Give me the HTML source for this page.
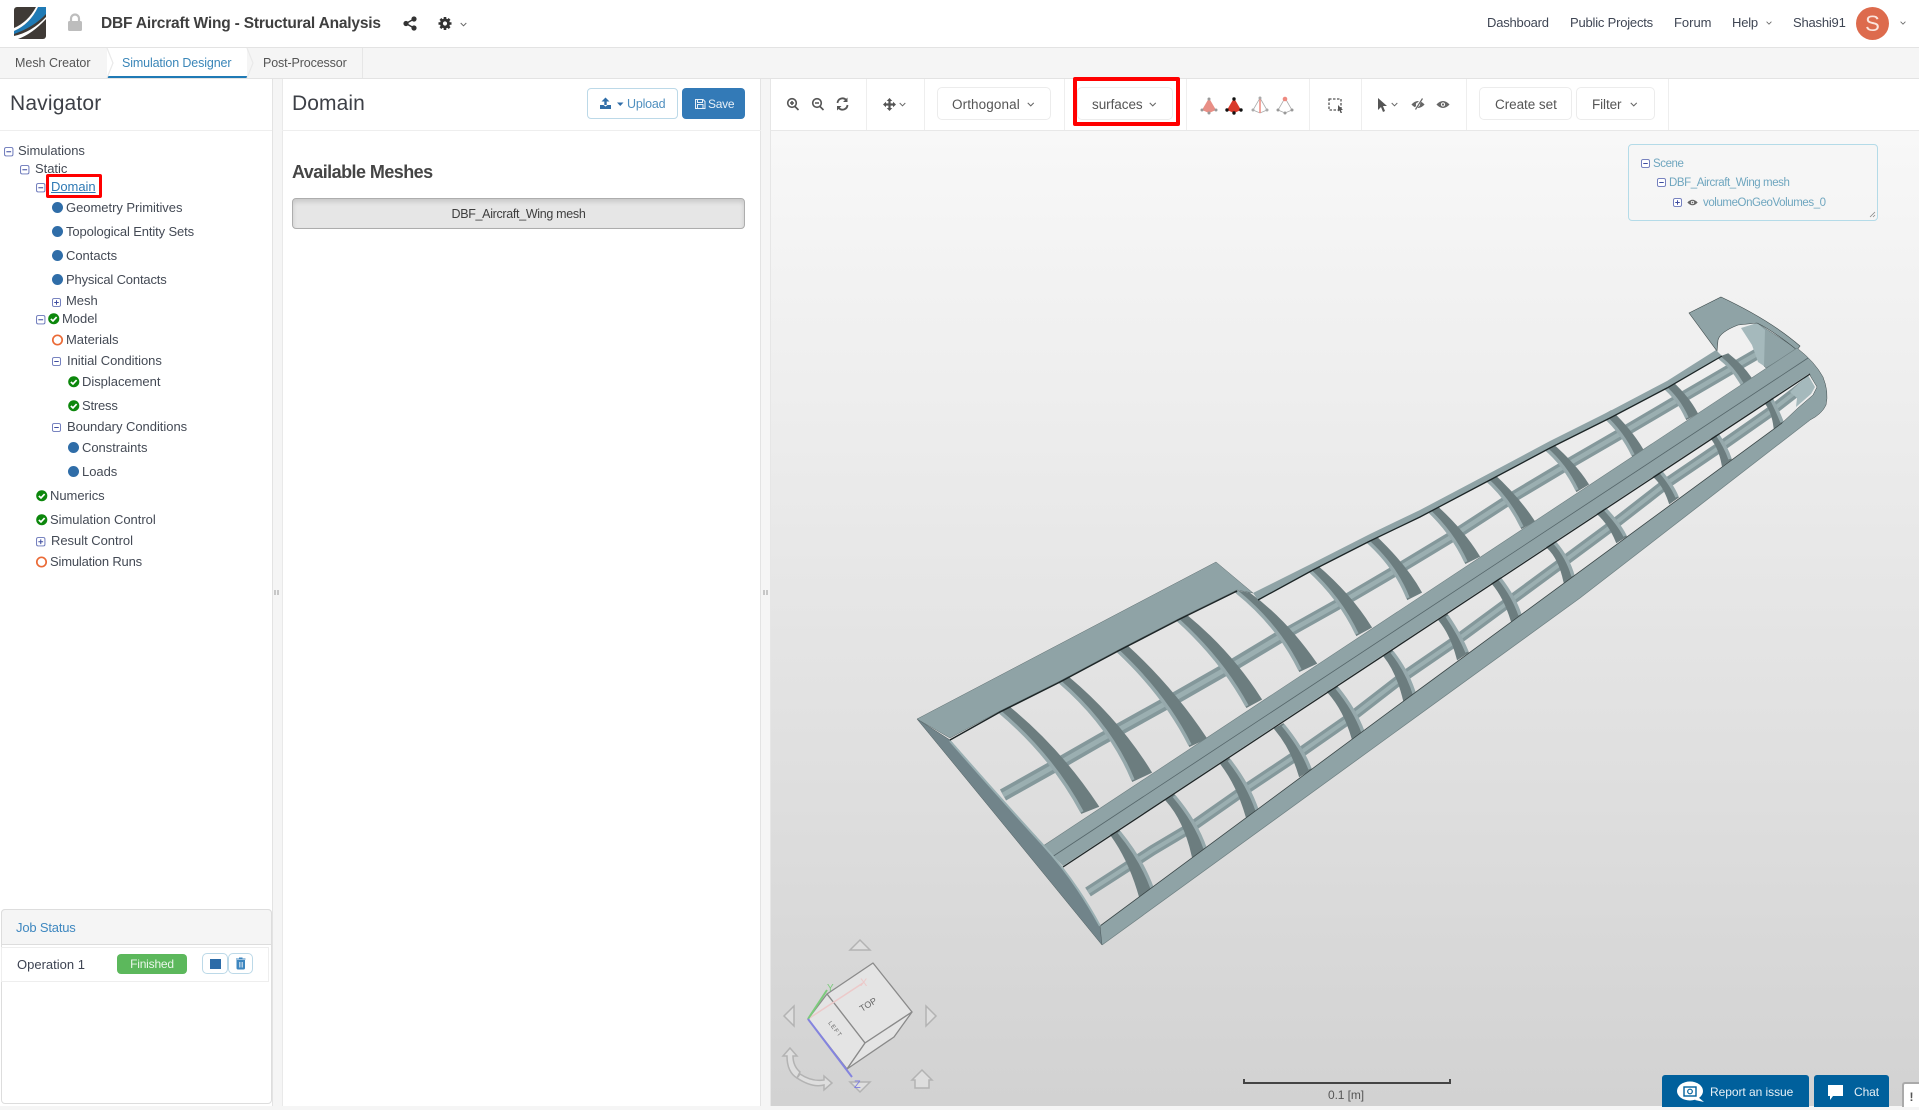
<!DOCTYPE html>
<html lang="en"><head><meta charset="utf-8"><title>DBF Aircraft Wing - Structural Analysis</title>
<style>
html,body{margin:0;padding:0;width:1919px;height:1107px;overflow:hidden;background:#f5f5f5;font-family:"Liberation Sans",sans-serif;color:#3d4352}
.a{position:absolute;box-sizing:border-box}
.t{position:absolute;white-space:nowrap;line-height:20px;font-size:13px;letter-spacing:-.25px}
.n{color:#444a55;font-size:13px;letter-spacing:-.03px}
.btn{position:absolute;box-sizing:border-box;border:1px solid #ececec;border-radius:5px;background:#fff;height:33px;top:87px}
.tb{color:#555;font-size:13.5px;letter-spacing:-.1px}
.sc{color:#6fa6bf;font-size:11.5px;letter-spacing:-.42px}
</style></head><body>
<!-- header -->
<div class="a" style="left:0;top:0;width:1919px;height:48px;background:#fff;border-bottom:1px solid #e3e3e3"></div>
<div class="t" style="left:101px;top:14px;font-size:15.5px;font-weight:bold;color:#3f3f3f;letter-spacing:-.19px">DBF Aircraft Wing - Structural Analysis</div>
<div class="t" style="left:1487px;top:13px;color:#3f4654;letter-spacing:-.2px">Dashboard</div>
<div class="t" style="left:1570px;top:13px;color:#3f4654;letter-spacing:-.2px">Public Projects</div>
<div class="t" style="left:1674px;top:13px;color:#3f4654;letter-spacing:-.02px">Forum</div>
<div class="t" style="left:1732px;top:13px;color:#3f4654;letter-spacing:-.2px">Help</div>
<div class="t" style="left:1793px;top:13px;color:#3f4654;letter-spacing:-.2px">Shashi91</div>
<div class="a" style="left:1856px;top:7px;width:33px;height:33px;border-radius:50%;background:#dd6b4d;color:#fbe4dc;font-size:22px;line-height:33px;text-align:center">S</div>
<!-- tabs -->
<div class="a" style="left:107px;top:48px;width:140px;height:30px;background:#fff;border-bottom:2px solid #1f7ab5"></div>
<div class="a" style="left:362px;top:48px;width:1px;height:30px;background:#e6e6e6"></div>
<div class="a" style="left:0;top:78px;width:1919px;height:1px;background:#e3e3e3"></div>
<div class="t" style="left:15px;top:53px;font-size:12.5px;color:#555;letter-spacing:-.02px">Mesh Creator</div>
<div class="t" style="left:122px;top:53px;font-size:12.5px;color:#3a86b8;letter-spacing:-.13px">Simulation Designer</div>
<div class="t" style="left:263px;top:53px;font-size:12.5px;color:#555;letter-spacing:-.13px">Post-Processor</div>
<!-- navigator -->
<div class="a" style="left:0;top:79px;width:273px;height:1027px;background:#fff;border-right:1px solid #e3e3e3"></div>
<div class="a" style="left:0;top:130px;width:272px;height:1px;background:#eee"></div>
<div class="t" style="left:10px;top:92px;font-size:21px;line-height:24px;color:#3d4047;letter-spacing:.17px">Navigator</div>
<div class="t n" style="left:18px;top:141px">Simulations</div>
<div class="t n" style="left:35px;top:159px">Static</div>
<div class="t n" style="left:51px;top:177px;color:#2f7ab5;text-decoration:underline">Domain</div>
<div class="t n" style="left:66px;top:198px">Geometry Primitives</div>
<div class="t n" style="left:66px;top:222px;letter-spacing:-.12px">Topological Entity Sets</div>
<div class="t n" style="left:66px;top:246px">Contacts</div>
<div class="t n" style="left:66px;top:270px;letter-spacing:-.16px">Physical Contacts</div>
<div class="t n" style="left:66px;top:291px">Mesh</div>
<div class="t n" style="left:62px;top:309px">Model</div>
<div class="t n" style="left:66px;top:330px">Materials</div>
<div class="t n" style="left:67px;top:351px">Initial Conditions</div>
<div class="t n" style="left:82px;top:372px">Displacement</div>
<div class="t n" style="left:82px;top:396px;letter-spacing:-.2px">Stress</div>
<div class="t n" style="left:67px;top:417px">Boundary Conditions</div>
<div class="t n" style="left:82px;top:438px">Constraints</div>
<div class="t n" style="left:82px;top:462px">Loads</div>
<div class="t n" style="left:50px;top:486px">Numerics</div>
<div class="t n" style="left:50px;top:510px">Simulation Control</div>
<div class="t n" style="left:51px;top:531px">Result Control</div>
<div class="t n" style="left:50px;top:552px;letter-spacing:-.18px">Simulation Runs</div>
<div class="a" style="left:46px;top:174px;width:56px;height:24px;border:3.5px solid #f00;border-radius:2px"></div>
<!-- job status -->
<div class="a" style="left:1px;top:909px;width:271px;height:195px;background:#fff;border:1px solid #ddd;border-radius:4px"></div>
<div class="a" style="left:1px;top:909px;width:271px;height:36px;background:#f5f5f5;border:1px solid #ddd;border-radius:4px 4px 0 0"></div>
<div class="t" style="left:16px;top:918px;font-size:13px;color:#3f88c0;letter-spacing:-.18px">Job Status</div>
<div class="a" style="left:1px;top:947px;width:268px;height:35px;border:1px solid #eee"></div>
<div class="t" style="left:17px;top:955px;font-size:13px;color:#3d4352;letter-spacing:0">Operation 1</div>
<div class="a" style="left:117px;top:954px;width:70px;height:20px;background:#5cb85c;border-radius:4px;color:#eaf6ea;font-size:12px;line-height:20px;text-align:center;letter-spacing:-.2px">Finished</div>
<div class="a" style="left:202px;top:953px;width:26px;height:21px;border:1px solid #bcd9e8;border-radius:5px;background:#fff"></div>
<div class="a" style="left:228px;top:953px;width:25px;height:21px;border:1px solid #bcd9e8;border-radius:5px;background:#fff"></div>
<div class="a" style="left:210px;top:959px;width:11px;height:10px;background:#2d6ca8"></div>
<!-- domain panel -->
<div class="a" style="left:282px;top:79px;width:479px;height:1027px;background:#fff;border-right:1px solid #e3e3e3;border-left:1px solid #e9e9e9"></div>
<div class="a" style="left:282px;top:130px;width:479px;height:1px;background:#eee"></div>
<div class="t" style="left:292px;top:92px;font-size:21px;line-height:24px;color:#3d4047;letter-spacing:.1px">Domain</div>
<div class="a" style="left:587px;top:88px;width:91px;height:31px;border:1px solid #bcd9e8;border-radius:4px;background:#fff"></div>
<div class="t" style="left:627px;top:94px;font-size:12.5px;color:#4f8fbf;letter-spacing:-.2px">Upload</div>
<div class="a" style="left:682px;top:88px;width:63px;height:31px;background:#337ab7;border-radius:4px"></div>
<div class="t" style="left:708px;top:94px;font-size:12px;color:#e8f0f7;letter-spacing:-.25px">Save</div>
<div class="t" style="left:292px;top:162px;font-size:18px;font-weight:bold;color:#454545;letter-spacing:-.55px">Available Meshes</div>
<div class="a" style="left:292px;top:198px;width:453px;height:31px;background:#e6e6e6;border:1px solid #adadad;border-radius:4px;box-shadow:inset 0 3px 5px rgba(0,0,0,.125);text-align:center;font-size:12.5px;line-height:31px;color:#3f3f3f;letter-spacing:-.32px">DBF_Aircraft_Wing mesh</div>
<!-- viewport -->
<div class="a" style="left:770px;top:131px;width:1149px;height:975px;background:linear-gradient(#f8f8f8,#d2d2d2);border-left:1px solid #e6e6e6"></div>
<div class="a" style="left:770px;top:79px;width:1149px;height:52px;background:#fff;border-bottom:1px solid #e8e8e8;border-left:1px solid #e6e6e6"></div>
<div class="a" style="left:866px;top:79px;width:1px;height:51px;background:#eee"></div>
<div class="a" style="left:924px;top:79px;width:1px;height:51px;background:#eee"></div>
<div class="a" style="left:1064px;top:79px;width:1px;height:51px;background:#eee"></div>
<div class="a" style="left:1186px;top:79px;width:1px;height:51px;background:#eee"></div>
<div class="a" style="left:1309px;top:79px;width:1px;height:51px;background:#eee"></div>
<div class="a" style="left:1361px;top:79px;width:1px;height:51px;background:#eee"></div>
<div class="a" style="left:1466px;top:79px;width:1px;height:51px;background:#eee"></div>
<div class="a" style="left:1668px;top:79px;width:1px;height:51px;background:#eee"></div>
<div class="btn" style="left:937px;width:114px"></div>
<div class="t tb" style="left:952px;top:95px;letter-spacing:.1px">Orthogonal</div>
<div class="btn" style="left:1077px;width:96px"></div>
<div class="t tb" style="left:1092px;top:95px;letter-spacing:-.05px">surfaces</div>
<div class="a" style="left:1073px;top:77px;width:107px;height:49px;border:4px solid #f00;border-radius:2px"></div>
<div class="btn" style="left:1479px;width:93px"></div>
<div class="t tb" style="left:1495px;top:95px;letter-spacing:-.05px">Create set</div>
<div class="btn" style="left:1576px;width:79px"></div>
<div class="t tb" style="left:1592px;top:95px">Filter</div>
<!-- scene tree -->
<div class="a" style="left:1628px;top:144px;width:250px;height:77px;border:1px solid #b4dbe8;border-radius:4px;background:rgba(245,245,245,.5)"></div>
<div class="t sc" style="left:1653px;top:154px">Scene</div>
<div class="t sc" style="left:1669px;top:173px">DBF_Aircraft_Wing mesh</div>
<div class="t sc" style="left:1703px;top:193px">volumeOnGeoVolumes_0</div>
<!-- scale -->
<div class="t" style="left:1328px;top:1085px;font-size:12px;color:#555;letter-spacing:-.1px">0.1 [m]</div>
<!-- feedback -->
<div class="a" style="left:1662px;top:1075px;width:147px;height:32px;background:#00609c;border-radius:3px 3px 0 0"></div>
<div class="a" style="left:1814px;top:1075px;width:75px;height:32px;background:#00609c;border-radius:3px 3px 0 0"></div>
<div class="t" style="left:1710px;top:1082px;font-size:12px;color:#e6f0f6;letter-spacing:-.05px">Report an issue</div>
<div class="t" style="left:1854px;top:1082px;font-size:12px;color:#e6f0f6;letter-spacing:-.1px">Chat</div>
<div class="a" style="left:1902px;top:1082px;width:17px;height:25px;background:#fff;border:2px solid #aaa;border-right:0;border-bottom:0;border-radius:3px 0 0 0;color:#555;font-size:12px;font-weight:bold;line-height:26px;text-align:center">!</div>

<svg class="a" style="left:0;top:0" width="1919" height="1107" viewBox="0 0 1919 1107">
<defs>
<symbol id="mn" viewBox="0 0 10 10"><rect x=".6" y=".6" width="8.8" height="8.8" rx="1.6" fill="#fff" stroke="#6673b8" stroke-width="1"/><path d="M2.5 5H7.5" stroke="#3f4da0" stroke-width="1.1"/></symbol>
<symbol id="pl" viewBox="0 0 10 10"><rect x=".6" y=".6" width="8.8" height="8.8" rx="1.6" fill="#fff" stroke="#6673b8" stroke-width="1"/><path d="M2.5 5H7.5M5 2.5V7.5" stroke="#3f4da0" stroke-width="1.1"/></symbol>
<symbol id="ck" viewBox="0 0 12 12"><circle cx="6" cy="6" r="5.8" fill="#0c870c"/><path d="M3 6.2L5.2 8.3L9 4.2" fill="none" stroke="#fff" stroke-width="1.8"/></symbol>
<symbol id="chev" viewBox="0 0 8 5"><path d="M.8 .8L4 4L7.2 .8" fill="none" stroke="#666" stroke-width="1.1"/></symbol>
<symbol id="eye" viewBox="0 0 16 10"><path d="M.5 5Q8 -3 15.5 5Q8 13 .5 5Z" fill="#666"/><circle cx="8" cy="5" r="2.4" fill="#fff"/><circle cx="8" cy="5" r="1.3" fill="#666"/></symbol>
</defs>
<!-- logo -->
<rect x="14" y="7" width="32" height="32" rx="3" fill="#3f3a36"/>
<path d="M14 31Q30 24 38 7H46V14Q34 27 14 34Z" fill="#1f7ab5"/>
<path d="M14 28Q28 22 36 7H38Q30 24 14 31Z" fill="#fff"/>
<path d="M14 36Q32 32 46 17V19Q32 34 18 39H14Z" fill="#fff"/>
<!-- lock -->
<path d="M71 21V18.5a4 4 0 0 1 8 0V21" fill="none" stroke="#bdbdbd" stroke-width="2.2"/><rect x="68" y="21" width="14" height="10" rx="1.5" fill="#bdbdbd"/>
<!-- share -->
<g fill="#333"><circle cx="406" cy="23.5" r="2.6"/><circle cx="414" cy="19" r="2.6"/><circle cx="414" cy="28" r="2.6"/></g><path d="M414 19L406 23.5L414 28" stroke="#333" stroke-width="1.5" fill="none"/>
<!-- gear -->
<path d="M445 17V30M438.500 23.500H451.500M440.400 18.900L449.600 28.100M449.600 18.900L440.400 28.100" stroke="#333" stroke-width="2.600"/><circle cx="445" cy="23.500" r="5" fill="#333"/><circle cx="445" cy="23.500" r="2.100" fill="#fff"/>
<use href="#chev" x="460" y="22" width="7" height="5"/>
<use href="#chev" x="1766" y="21" width="6" height="4"/>
<use href="#chev" x="1900" y="21" width="6" height="4"/>
<!-- tabs chevrons -->
<path d="M107 48L113 63L107 78M247 48L253 63L247 78" fill="none" stroke="#e9e9e9" stroke-width="1.2"/>
<!-- handles -->
<path d="M275 590v5M278 590v5M764 590v5M767 590v5" stroke="#999" stroke-width="1"/>
<!-- tree icons -->
<use href="#mn" x="4" y="147" width="9.5" height="9.5"/><use href="#mn" x="20" y="165" width="9.5" height="9.5"/><use href="#mn" x="36" y="183" width="9.5" height="9.5"/>
<use href="#pl" x="52" y="298" width="9" height="9"/><use href="#mn" x="36" y="315" width="9.5" height="9.5"/><use href="#mn" x="52" y="357" width="9" height="9"/><use href="#mn" x="52" y="423" width="9" height="9"/><use href="#pl" x="36" y="537" width="9.5" height="9.5"/>
<g fill="#2f6da8"><circle cx="57.5" cy="207.500" r="5.5"/><circle cx="57.5" cy="231.500" r="5.5"/><circle cx="57.5" cy="255.500" r="5.5"/><circle cx="57.5" cy="279.500" r="5.5"/><circle cx="73.5" cy="447.500" r="5.5"/><circle cx="73.5" cy="471.500" r="5.5"/></g>
<use href="#ck" x="48" y="313" width="11.5" height="11.5"/><use href="#ck" x="68" y="376" width="11.5" height="11.5"/><use href="#ck" x="68" y="400" width="11.5" height="11.5"/><use href="#ck" x="36" y="490" width="11.5" height="11.5"/><use href="#ck" x="36" y="514" width="11.5" height="11.5"/>
<g fill="none" stroke="#ea6a36" stroke-width="1.7"><circle cx="57.5" cy="340" r="4.7"/><circle cx="41.5" cy="562" r="4.7"/></g>
<!-- trash -->
<path d="M237 960.500h7.500v7.500a1 1 0 0 1-1 1h-5.500a1 1 0 0 1-1-1zM236 959h9.500M239 958h3.500" fill="#3d86bf" stroke="#3d86bf" stroke-width="1"/><path d="M239.300 962v5.500M241 962v5.500M242.700 962v5.500" stroke="#fff" stroke-width=".6"/>
<!-- upload / save icons -->
<path d="M605.500 105v-5" fill="none" stroke="#2f6da8" stroke-width="2.400"/><path d="M601.500 101.500l4-4l4 4z" fill="#2f6da8"/><path d="M600 105h3.500l2 1.500l2-1.500h3.500v4h-11z" fill="#2f6da8"/><path d="M617 102.500h6.500l-3.250 3.500z" fill="#2f6da8"/>
<path d="M695.500 99.500h7.500l2 2v7h-9.500z M697.500 99.500v3h5v-3 M697.500 108v-3.500h5.500v3.500" fill="none" stroke="#e8f0f7" stroke-width="1"/>
<!-- toolbar icons -->
<g fill="none" stroke="#555" stroke-width="1.600"><circle cx="792" cy="103" r="4.300"/><path d="M795 106.500l3.500 3.500M790 103h4M792 101v4"/><circle cx="817" cy="103" r="4.300"/><path d="M820 106.500l3.500 3.500M815 103h4"/><path d="M837.500 103a5 5 0 0 1 8.700-3M847.500 105a5 5 0 0 1-8.700 3" stroke-width="1.800"/></g>
<path d="M847.500 97.500v4.500h-4.500zM837 110.500v-4.500h4.500z" fill="#555"/>
<g fill="#555"><path d="M889.500 98l-2.800 3h5.600zM889.500 111l-2.800-3h5.600zM883 104.500l3-2.800v5.600zM896 104.500l-3-2.800v5.600z"/></g><path d="M889.500 100v9M885 104.500h9" stroke="#555" stroke-width="2.200"/>
<use href="#chev" x="899" y="102" width="7" height="5"/><use href="#chev" x="1027" y="102" width="7.500" height="5"/><use href="#chev" x="1149" y="102" width="7.500" height="5"/><use href="#chev" x="1391" y="102" width="7" height="5"/><use href="#chev" x="1630" y="102" width="7.500" height="5"/>
<!-- tetra icons -->
<path d="M1209 98L1216 110L1209 113L1202 110Z" fill="#e88e85"/><g fill="#999"><circle cx="1209" cy="99" r="1.500"/><circle cx="1202" cy="110" r="1.500"/><circle cx="1216" cy="110" r="1.500"/><circle cx="1209" cy="113" r="1.500"/></g>
<path d="M1234 98L1241 110L1234 113L1227 110Z" fill="#d9392a"/><g fill="#111"><circle cx="1234" cy="99" r="1.700"/><circle cx="1227" cy="110" r="1.700"/><circle cx="1241" cy="110" r="1.700"/><circle cx="1234" cy="113" r="1.700"/></g>
<path d="M1260 98L1267 110L1260 113L1253 110Z" fill="none" stroke="#aaa" stroke-width=".8"/><path d="M1260 98L1260 113" stroke="#ee8a80" stroke-width="1.500"/><g fill="#aaa"><circle cx="1253" cy="110" r="1.500"/><circle cx="1267" cy="110" r="1.500"/><circle cx="1260" cy="98" r="1.500"/></g>
<path d="M1285 98L1292 110L1285 113L1278 110Z" fill="none" stroke="#aaa" stroke-width=".8"/><circle cx="1285" cy="99" r="2.300" fill="#ee8a80"/><g fill="#999"><circle cx="1278" cy="110" r="1.500"/><circle cx="1292" cy="110" r="1.500"/><circle cx="1285" cy="113" r="1.500"/></g>
<rect x="1329" y="99" width="12" height="11" fill="none" stroke="#555" stroke-width="1.300" stroke-dasharray="2.500 1.500"/><path d="M1338 105l5 5h-2l1 3h-1.500l-1-2.800l-1.500 1.300z" fill="#555"/>
<path d="M1378 98l9 8h-4l2 5l-2 1l-2-5l-3 3z" fill="#555"/>
<use href="#eye" x="1411" y="100" width="14" height="9"/><path d="M1422 98l-7 12" stroke="#fff" stroke-width="2.500"/><path d="M1422.500 98.500l-7 11" stroke="#666" stroke-width="1.200"/>
<use href="#eye" x="1436" y="100" width="14" height="9"/>
<!-- scene icons -->
<use href="#mn" x="1641" y="159" width="9" height="9"/><use href="#mn" x="1657" y="178" width="9" height="9"/><use href="#pl" x="1673" y="198" width="9" height="9"/><use href="#eye" x="1687" y="199" width="11" height="7"/>
<path d="M1870 217l5-5M1873 217l2-2" stroke="#888" stroke-width=".8"/>

<!-- WING -->
<g>
<!-- stringers -->
<g fill="none" stroke-linecap="butt">
<path d="M1003,795 L1060,763 L1100,740 L1172,700 L1228,668 L1283,635" stroke="#84989b" stroke-width="12.500"/>
<path d="M1003,795 L1060,763 L1100,740 L1172,700 L1228,668 L1283,635" stroke="#9bafb1" stroke-width="5"/>
<path d="M1283,635 L1342,602 L1400,568 L1453,536 L1513,497 L1570,463 L1627,430 L1683,397 L1743,362 L1776,343" stroke="#84989b" stroke-width="11"/>
<path d="M1283,635 L1342,602 L1400,568 L1453,536 L1513,497 L1570,463 L1627,430 L1683,397 L1743,362 L1776,343" stroke="#9bafb1" stroke-width="4.500"/>
<path d="M1088,892 L1153,850 L1190,828 L1240,793 L1297,755 L1350,718 L1403,677 L1457,640 L1510,601 L1563,562 L1613,525 L1667,483 L1720,447 L1770,412 L1806,384" stroke="#84989b" stroke-width="10.500"/>
<path d="M1088,892 L1153,850 L1190,828 L1240,793 L1297,755 L1350,718 L1403,677 L1457,640 L1510,601 L1563,562 L1613,525 L1667,483 L1720,447 L1770,412 L1806,384" stroke="#9bafb1" stroke-width="4"/>
</g>
<!-- ribs -->
<g fill="#6c7d7f" stroke="#6c7d7f" stroke-width="3">
<path d="M1000,712 Q1052,756 1082,812 L1097,806 Q1060,750 1009,708Z"/>
<path d="M1060,682 Q1110,725 1133,780 L1150,772 Q1118,720 1068,678Z"/>
<path d="M1118,651 Q1165,695 1190,745 L1205,738 Q1172,688 1127,647Z"/>
<path d="M1178,620 Q1222,660 1247,706 L1260,699 Q1230,652 1186,616Z"/>
<path d="M1237,592 Q1278,625 1300,670 L1315,663 Q1285,620 1249,594Z"/>
<path d="M1308,569 Q1340,598 1357,634 L1370,627 Q1350,595 1316,566Z"/>
<path d="M1365,539 Q1395,565 1408,598 L1420,592 Q1405,565 1373,535Z"/>
<path d="M1427,509 Q1452,532 1466,562 L1478,556 Q1462,530 1434,505Z"/>
<path d="M1485,478 Q1508,498 1522,527 L1533,521 Q1518,498 1492,474Z"/>
<path d="M1545,448 Q1565,465 1577,490 L1587,484 Q1575,465 1551,444Z"/>
<path d="M1604,416 Q1622,432 1633,455 L1642,450 Q1630,430 1611,412Z"/>
<path d="M1663,386 Q1678,398 1687,418 L1696,413 Q1688,398 1672,383Z"/>
<path d="M1720,358 Q1733,368 1742,384 L1750,378 Q1742,366 1728,355Z"/>
<path d="M1112,835 Q1130,860 1140,895 L1152,888 Q1142,860 1119,832Z"/>
<path d="M1167,800 Q1185,820 1193,855 L1205,848 Q1196,822 1174,796Z"/>
<path d="M1222,764 Q1238,785 1247,816 L1257,810 Q1248,784 1229,760Z"/>
<path d="M1276,729 Q1292,748 1300,775 L1310,769 Q1302,748 1283,725Z"/>
<path d="M1329,692 Q1345,710 1353,738 L1363,732 Q1355,710 1337,688Z"/>
<path d="M1385,656 Q1398,672 1405,702 L1415,696 Q1408,672 1392,652Z"/>
<path d="M1440,620 Q1452,635 1458,658 L1467,652 Q1460,635 1447,616Z"/>
<path d="M1493,583 Q1505,597 1512,620 L1520,615 Q1514,597 1500,579Z"/>
<path d="M1548,547 Q1560,558 1565,582 L1573,576 Q1568,558 1555,543Z"/>
<path d="M1598,513 Q1610,524 1617,541 L1625,536 Q1619,524 1605,509Z"/>
<path d="M1653,475 Q1664,484 1670,502 L1677,497 Q1672,485 1660,471Z"/>
<path d="M1712,438 Q1720,448 1723,464 L1730,459 Q1726,447 1717,434Z"/>
<path d="M1767,404 Q1773,412 1775,427 L1782,422 Q1778,412 1772,400Z"/>
</g>
<g fill="none" stroke="#96a9ac" stroke-width="3.500">
<path d="M1000,712 Q1052,756 1082,812"/><path d="M1060,682 Q1110,725 1133,780"/><path d="M1118,651 Q1165,695 1190,745"/><path d="M1178,620 Q1222,660 1247,706"/><path d="M1237,592 Q1278,625 1300,670"/><path d="M1308,569 Q1340,598 1357,634"/><path d="M1365,539 Q1395,565 1408,598"/><path d="M1427,509 Q1452,532 1466,562"/><path d="M1485,478 Q1508,498 1522,527"/><path d="M1545,448 Q1565,465 1577,490"/><path d="M1604,416 Q1622,432 1633,455"/><path d="M1663,386 Q1678,398 1687,418"/><path d="M1720,358 Q1733,368 1742,384"/>
<path d="M1119,832 Q1142,860 1152,888"/><path d="M1174,796 Q1196,822 1205,848"/><path d="M1229,760 Q1248,784 1257,810"/><path d="M1283,725 Q1302,748 1310,769"/><path d="M1337,688 Q1355,710 1363,732"/><path d="M1392,652 Q1408,672 1415,696"/><path d="M1447,616 Q1460,635 1467,652"/><path d="M1500,579 Q1514,597 1520,615"/><path d="M1555,543 Q1568,558 1573,576"/><path d="M1605,509 Q1619,524 1625,536"/><path d="M1660,471 Q1672,485 1677,497"/><path d="M1717,434 Q1726,447 1730,459"/><path d="M1772,400 Q1778,412 1782,422"/>
</g>
<!-- tip surfaces -->
<path d="M1757,323 L1797,349 L1766,368 L1760,362 Z" fill="#8fa3a6" stroke="#5f6f71" stroke-width=".5"/>
<path d="M1741,328 L1757,323 L1765,330 L1764,366 L1758,362 L1752,345 Z" fill="#a5b9bc"/>
<path d="M1689,313 L1721,297 Q1770,320 1800,346 L1797,350 Q1772,330 1757,323 L1738,325 Q1720,332 1718,340 L1717,351 Z" fill="#8fa3a6" stroke="#3e4a4b" stroke-width=".6"/>
<path d="M1797,348 Q1815,362 1823,377 Q1829,392 1826,405 Q1822,414 1810,420 L1782,441 L1782,423 L1798,408 L1813,395 L1817,387 L1808,372 Z" fill="#8fa3a6" stroke="#3e4a4b" stroke-width=".5"/>
<path d="M1790,392 L1808,375 L1815,387 L1811,394 L1796,407 L1797,398Z" fill="#a5b9bc"/>
<!-- thin top strip -->
<path d="M1253,593 L1313,563 L1370,534 L1420,510 L1490,473 L1550,441 L1610,411 L1667,381 L1716,350 L1722,356 L1667,388 L1610,418 L1550,448 L1490,480 L1420,517 L1370,541 L1313,570 L1258,600Z" fill="#8fa3a6"/>
<path d="M1258,600 L1313,570 L1370,541 L1420,517 L1490,480 L1550,448 L1610,418 L1667,388 L1722,356" fill="none" stroke="#1c2526" stroke-width="1.300"/>
<!-- spar -->
<path d="M1043,846 L1797,348 L1815,366 L1810,373 L1063,866Z" fill="#8fa3a6"/>
<path d="M1052,857 L1808,358" stroke="#55666a" stroke-width=".8" fill="none"/>
<path d="M1063,867 L1810,374" stroke="#1c2526" stroke-width="1.300" fill="none"/>
<path d="M1043,846 L1797,348" stroke="#6d7f81" stroke-width=".6" fill="none"/>
<!-- lower strip -->
<path d="M1102,945 L1580,598 L1810,420 L1782,423 L1420,689 L1100,926Z" fill="#8fa3a6"/>
<path d="M1100,926 L1420,689 L1782,423" fill="none" stroke="#3a4647" stroke-width=".8"/>
<path d="M1102,945 L1580,598 L1810,420" fill="none" stroke="#6d7f81" stroke-width=".7"/>
<!-- left edge -->
<path d="M917,719 Q1000,820 1102,945 L1100,926 Q1075,880 1043,844 Q1000,798 950,740Z" fill="#71848a" stroke="#4c5a5c" stroke-width=".5"/>
<path d="M950,741 Q1000,798 1043,845 Q1075,880 1100,926" fill="none" stroke="#9ab0b3" stroke-width="2"/>
<!-- top panel -->
<path d="M917,719 L1216,562 L1253,593 L1237,590 L1180,618 L1120,649 L1060,681 L1000,711 L950,738 Z" fill="#8fa3a6" stroke="#5f6f71" stroke-width=".5"/>
<path d="M950,740 L1000,712 L1060,682 L1120,650 L1180,619 L1237,591" fill="none" stroke="#1c2526" stroke-width="1.500"/>
</g>

<!-- gizmo -->
<g fill="#dedede" stroke="#b3b3b3" stroke-width="1.500">
<path d="M850,950L860,940L870,950Z"/><path d="M794,1006L784,1016L794,1026Z"/><path d="M926,1006L936,1016L926,1026Z"/><path d="M850,1082L870,1082L860,1092Z"/>
<path d="M922,1070L912,1080H915V1088H929V1080H932Z"/>
<path d="M790,1048L783,1056H787Q787,1072 797,1078L800,1072Q793,1066 793,1056H797Z"/>
<path d="M797,1078Q812,1088 824,1085V1090L832,1083L824,1076V1080Q812,1082 800,1074Z"/>
</g>
<g stroke="#8a8a8a" stroke-width="1.300" fill="#e4e4e4" stroke-linejoin="round">
<path d="M827,994L873,963L912,1012L865,1043Z"/>
<path d="M808,1019L827,994L865,1043L847,1069Z"/>
<path d="M865,1043L912,1012L894,1037L847,1069Z"/>
</g>
<path d="M808,1019L863,983" stroke="#ecc9c9" stroke-width="1.500"/>
<path d="M808,1019L827,990" stroke="#7ccb7c" stroke-width="2"/>
<path d="M808,1019L852,1077" stroke="#8484df" stroke-width="2"/>
<text x="860" y="986" font-size="11" fill="#edc8c8" font-family="Liberation Sans">X</text>
<text x="827" y="991" font-size="10" fill="#7ccb7c" font-family="Liberation Sans">Y</text>
<text x="854" y="1088" font-size="11" fill="#7b7be0" font-family="Liberation Sans">Z</text>
<text x="0" y="0" font-size="9" fill="#666" font-family="Liberation Sans" transform="translate(862,1012) rotate(-32)">TOP</text>
<text x="0" y="0" font-size="6" fill="#666" font-family="Liberation Sans" letter-spacing="1" transform="translate(828,1023) rotate(52)">LEFT</text>
<!-- scale bar -->
<path d="M1244,1079V1083H1450V1079" fill="none" stroke="#444" stroke-width="2"/>
<!-- feedback icons -->
<ellipse cx="1690" cy="1091" rx="13" ry="9.500" fill="#fff"/><path d="M1698,1097l6,5l-9,-2z" fill="#fff"/><rect x="1684" y="1087" width="12" height="9" fill="none" stroke="#00609c" stroke-width="1.400"/><circle cx="1690" cy="1091.500" r="2.300" fill="none" stroke="#00609c" stroke-width="1.200"/>
<path d="M1828,1085h15v11h-10l-3,4v-4h-2z" fill="#fff"/>
</svg>
</body></html>
